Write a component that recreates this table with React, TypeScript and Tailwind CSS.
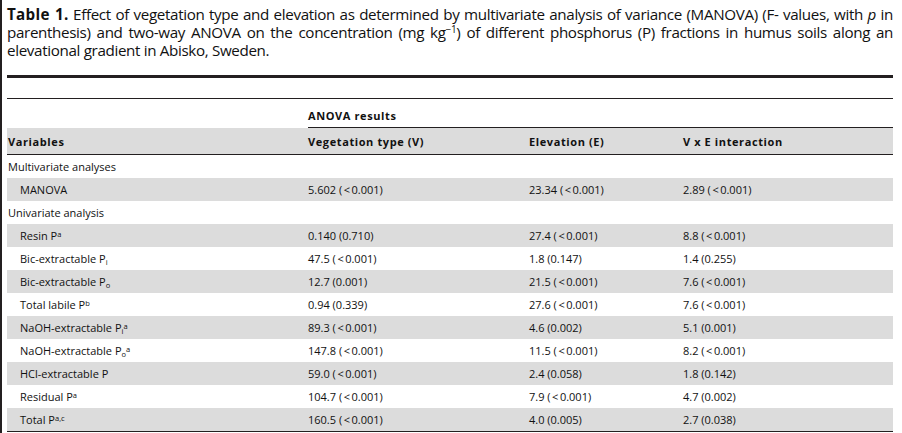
import React from "react";

type Row = {
  label: React.ReactNode;
  v?: string;
  e?: string;
  x?: string;
  gray?: boolean;
  indent?: boolean;
};

const Sup = ({ children }: { children: React.ReactNode }) => (
  <sup className="text-[7.5px] leading-none top-[-0.45em]">{children}</sup>
);
const Sub = ({ children }: { children: React.ReactNode }) => (
  <sub className="text-[7.5px] leading-none bottom-[-0.2em]">{children}</sub>
);

const Val = ({ s }: { s?: string }) => {
  if (!s) return null;
  const parts = s.split("<");
  return (
    <>
      {parts.map((p, i) => (
        <React.Fragment key={i}>
          {i > 0 && <span className="mx-[1.5px]">&lt;</span>}
          {p}
        </React.Fragment>
      ))}
    </>
  );
};

const rows: Row[] = [
  { label: "Multivariate analyses" },
  { label: "MANOVA", v: "5.602 (<0.001)", e: "23.34 (<0.001)", x: "2.89 (<0.001)", gray: true, indent: true },
  { label: "Univariate analysis" },
  { label: <>Resin P<Sup>a</Sup></>, v: "0.140 (0.710)", e: "27.4 (<0.001)", x: "8.8 (<0.001)", gray: true, indent: true },
  { label: <>Bic-extractable P<Sub>i</Sub></>, v: "47.5 (<0.001)", e: "1.8 (0.147)", x: "1.4 (0.255)", indent: true },
  { label: <>Bic-extractable P<Sub>o</Sub></>, v: "12.7 (0.001)", e: "21.5 (<0.001)", x: "7.6 (<0.001)", gray: true, indent: true },
  { label: <>Total labile P<Sup>b</Sup></>, v: "0.94 (0.339)", e: "27.6 (<0.001)", x: "7.6 (<0.001)", indent: true },
  { label: <>NaOH-extractable P<Sub>i</Sub><Sup>a</Sup></>, v: "89.3 (<0.001)", e: "4.6 (0.002)", x: "5.1 (0.001)", gray: true, indent: true },
  { label: <>NaOH-extractable P<Sub>o</Sub><Sup>a</Sup></>, v: "147.8 (<0.001)", e: "11.5 (<0.001)", x: "8.2 (<0.001)", indent: true },
  { label: "HCl-extractable P", v: "59.0 (<0.001)", e: "2.4 (0.058)", x: "1.8 (0.142)", gray: true, indent: true },
  { label: <>Residual P<Sup>a</Sup></>, v: "104.7 (<0.001)", e: "7.9 (<0.001)", x: "4.7 (0.002)", indent: true },
  { label: <>Total P<Sup>a,c</Sup></>, v: "160.5 (<0.001)", e: "4.0 (0.005)", x: "2.7 (0.038)", gray: true, indent: true },
];

export default function App() {
  return (
    <div className="w-[902px] h-[433px] bg-white border-l-2 border-[#231f20] pl-[5px] pr-[9px] text-[#111] font-['Open_Sans',sans-serif] overflow-hidden">
      <div className="pt-[5px] text-[15.2px] leading-[18px] tracking-[-0.35px]">
        <div className="text-justify [text-align-last:justify]">
          <span className="font-bold tracking-[0.3px]">Table 1.</span> Effect of vegetation type and elevation as determined by multivariate analysis of variance (MANOVA) (F- values, with <i>p</i> in
        </div>
        <div className="text-justify [text-align-last:justify]">
          parenthesis) and two-way ANOVA on the concentration (mg kg<sup className="text-[10px] leading-none">−1</sup>) of different phosphorus (P) fractions in humus soils along an
        </div>
        <div>elevational gradient in Abisko, Sweden.</div>
      </div>
      <div className="mt-[16px] h-[3px] bg-[#231f20]" />
      <div className="mt-[20px] h-px bg-[#231f20]" />
      <div className="text-[11px] leading-[15px]">
        <div className="grid grid-cols-[301px_1fr] h-[29px]">
          <div />
          <div className="border-b border-[#231f20] flex items-end pb-[4px] font-bold tracking-[0.6px]">ANOVA results</div>
        </div>
        <div className="grid grid-cols-[301px_221px_154px_1fr] h-[27px] bg-[#dcdcdc] border-b border-[#231f20] items-center font-bold tracking-[0.6px]">
          <div className="pl-[1px]">Variables</div>
          <div>Vegetation type (V)</div>
          <div>Elevation (E)</div>
          <div>V x E interaction</div>
        </div>
        {rows.map((r, i) => (
          <div
            key={i}
            className={`grid grid-cols-[301px_221px_154px_1fr] h-[23px] items-center ${r.gray ? "bg-[#dcdcdc]" : "bg-white"}`}
          >
            <div className={r.indent ? "pl-[13px]" : "pl-[1px]"}>{r.label}</div>
            <div><Val s={r.v} /></div>
            <div><Val s={r.e} /></div>
            <div><Val s={r.x} /></div>
          </div>
        ))}
        <div className="h-px bg-[#231f20]" />
      </div>
    </div>
  );
}
